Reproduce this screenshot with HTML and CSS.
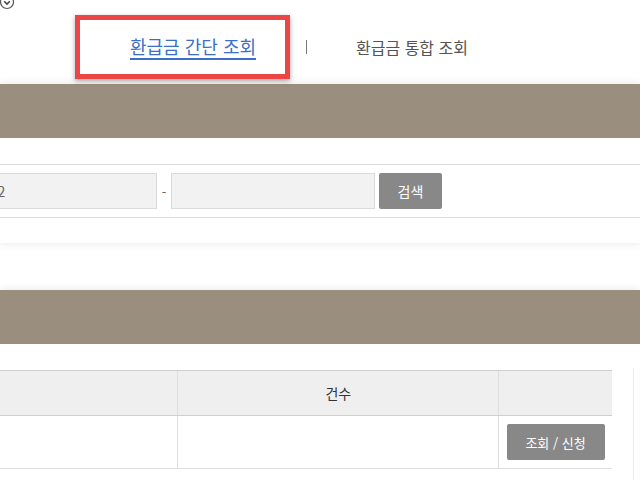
FILE: index.html
```html
<!DOCTYPE html>
<html lang="ko">
<head>
    <meta charset="UTF-8">
    <meta name="viewport" content="width=device-width, initial-scale=1.0">
    <title>환급금 조회</title>
    <link rel="stylesheet" href="styles.css">
</head>
<body>

    <div class="util">
        <svg class="util-icon" width="16" height="16" viewBox="0 0 16 16">
            <circle cx="7" cy="7" r="6.5" fill="none" stroke="#555" stroke-width="1.2"/>
            <path d="M4.2 6.2 L7 9 L9.8 6.2" fill="none" stroke="#444" stroke-width="1.6"/>
        </svg>
    </div>

    <div class="tabs">
        <div class="tab-active">
            <a class="tab-link" href="#">환급금 간단 조회</a>
        </div>
        <span class="tab-sep"></span>
        <a class="tab" href="#">환급금 통합 조회</a>
    </div>

    <div class="panel">
        <div class="band"></div>
        <div class="search">
            <div class="search-row">
                <input class="field field-first" type="text" value="20240102">
                <span class="dash">-</span>
                <input class="field field-second" type="text" value="">
                <button class="btn btn-search">검색</button>
            </div>
        </div>
    </div>

    <div class="panel panel-list">
        <div class="band"></div>
        <div class="list">
            <table class="result">
                <tr>
                    <th class="col-a"></th>
                    <th class="col-b">건수</th>
                    <th class="col-c"></th>
                </tr>
                <tr>
                    <td></td>
                    <td></td>
                    <td><button class="btn btn-apply">조회 / 신청</button></td>
                </tr>
            </table>
            <div class="side"></div>
        </div>
    </div>

</body>
</html>
```

FILE: styles.css
```css
body {
    margin: 0;
    font-family: "Noto Sans CJK KR", "Noto Sans", sans-serif;
    background: #fff;
    color: #333;
    overflow: hidden;
    width: 640px;
    height: 480px;
}
.util {
    height: 0;
    display: flow-root;
}
.util-icon {
    display: block;
    margin-top: -5px;
}
.tabs {
    display: flex;
    align-items: center;
    height: 84px;
    box-sizing: border-box;
    padding-top: 15px;
    padding-bottom: 5px;
}
.tab-active {
    margin-left: 75px;
    width: 215px;
    height: 64px;
    box-sizing: border-box;
    border: 5px solid #ec4545;
    box-shadow: 0 2px 5px rgba(0, 0, 0, 0.35);
    display: flex;
    align-items: center;
    padding-left: 50px;
}
.tab-link {
    color: #3b6fc8;
    font-size: 18px;
    text-decoration: none;
    border-bottom: 2px solid #3b6fc8;
    line-height: 22px;
    padding-bottom: 1px;
}
.tab-sep {
    width: 1px;
    height: 14px;
    background: #777;
    margin-left: 16px;
}
.tab {
    margin-left: 49px;
    color: #555;
    font-size: 16px;
    text-decoration: none;
}
.panel {
    background: #fff;
    box-shadow: 0 0 9px rgba(0, 0, 0, 0.1);
    padding-bottom: 25px;
}
.band {
    height: 54px;
    background: #9a8f7e;
}
.search {
    padding-top: 26px;
}
.search-row {
    display: flex;
    align-items: center;
    border-top: 1px solid #dcdcdc;
    border-bottom: 1px solid #dcdcdc;
    padding: 8px 0;
}
.field {
    height: 36px;
    box-sizing: border-box;
    background: #f2f2f2;
    border: 1px solid #dadada;
    font-family: inherit;
    font-size: 14px;
    color: #666;
    padding: 0 10px;
    outline: none;
}
.field-first {
    width: 225px;
    margin-left: -68px;
}
.dash {
    width: 14px;
    text-align: center;
    color: #666;
    font-size: 13px;
}
.field-second {
    width: 204px;
}
.btn {
    background: #888;
    color: #fff;
    border: none;
    border-radius: 2px;
    font-family: inherit;
    cursor: pointer;
}
.btn-search {
    width: 63px;
    height: 36px;
    margin-left: 4px;
    font-size: 14px;
}
.panel-list {
    margin-top: 47px;
    padding-bottom: 40px;
}
.list {
    display: flex;
    align-items: flex-start;
    padding-top: 26px;
}
.result {
    border-collapse: collapse;
    margin-left: -150px;
    width: 762px;
    flex-shrink: 0;
}
.result th,
.result td {
    padding: 0;
    border-left: 1px solid #dedede;
}
.result th {
    background: #efefef;
    height: 44px;
    font-weight: normal;
    font-size: 14px;
    color: #333;
    border-top: 1px solid #cfcfcf;
    border-bottom: 1px solid #cfcfcf;
}
.result td {
    height: 52px;
    border-bottom: 1px solid #dedede;
    text-align: center;
}
.col-a {
    width: 328px;
}
.col-b {
    width: 321px;
}
.col-c {
    width: 113px;
}
.btn-apply {
    width: 98px;
    height: 36px;
    font-size: 13px;
}
.side {
    margin-left: 21px;
    margin-top: -2px;
    border-left: 1px solid #ececec;
    height: 140px;
}
```
